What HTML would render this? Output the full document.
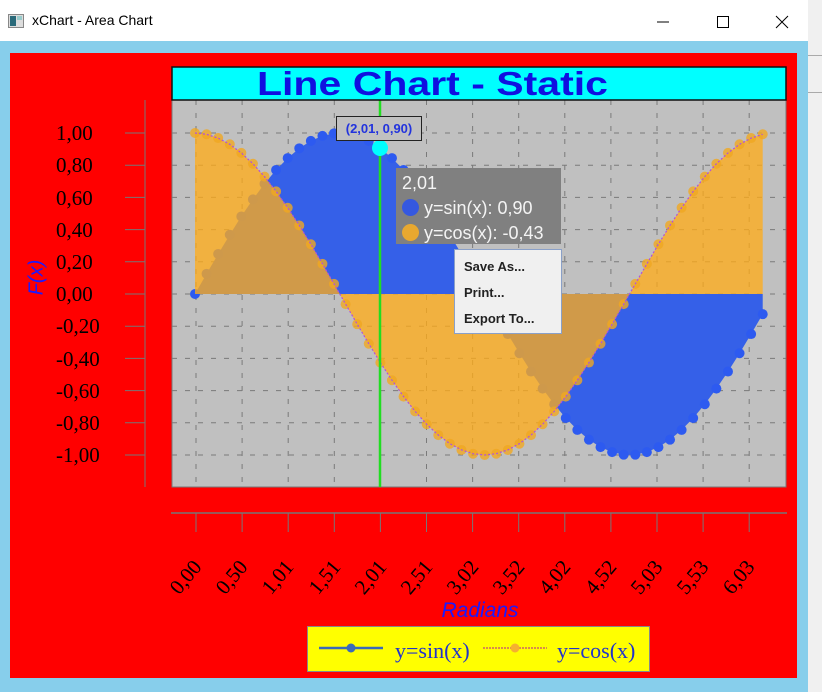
<!DOCTYPE html>
<html><head><meta charset="utf-8">
<style>
*{margin:0;padding:0}
body{width:822px;height:692px;overflow:hidden;background:#f0f0f0;position:relative;font-family:"Liberation Sans",sans-serif}
#win{position:absolute;left:0;top:0;width:808px;height:692px;background:#87ceeb;border-right:1px solid #999}
#tb{position:absolute;left:0;top:0;width:808px;height:41px;background:#fff}
#tb .t{position:absolute;left:32px;top:12px;font-size:14px;color:#000}
#red{position:absolute;left:10px;top:53px;width:787px;height:625px;background:#f00}
.yl{position:absolute;left:56px;font-family:"Liberation Serif",serif;font-size:21px;color:#000;line-height:20px}
.xl{position:absolute;font-family:"Liberation Serif",serif;font-size:21px;color:#000;transform-origin:right bottom;transform:rotate(-50deg);white-space:nowrap}
</style></head><body>
<div id="win">
<div id="tb">
<svg style="position:absolute;left:8px;top:14px" width="16" height="14"><rect x="0.5" y="0.5" width="15" height="13" fill="#ddd" stroke="#888"/><rect x="2" y="2" width="6" height="10" fill="#2a6a7a"/><rect x="9" y="2" width="5" height="4" fill="#9cc"/></svg>
<div class="t">xChart - Area Chart</div>
<svg style="position:absolute;left:650px;top:12px" width="150" height="20"><line x1="7" y1="10" x2="19" y2="10" stroke="#000"/><rect x="67.5" y="4.5" width="11" height="11" fill="none" stroke="#000"/><path d="M126 4 L138 16 M138 4 L126 16" stroke="#000"/></svg>
</div>
<div id="red"></div>
</div>
<div style="position:absolute;left:808px;top:0;width:14px;height:692px;background:#f0f0f0"></div>
<div style="position:absolute;left:808px;top:55px;width:14px;height:1px;background:#aaa"></div>
<div style="position:absolute;left:808px;top:92px;width:14px;height:1px;background:#aaa"></div>

<svg id="ch" style="position:absolute;left:0;top:0" width="822" height="692"></svg>

<div class="yl" style="top:123px">1,00</div>
<div class="yl" style="top:155px">0,80</div>
<div class="yl" style="top:188px">0,60</div>
<div class="yl" style="top:220px">0,40</div>
<div class="yl" style="top:252px">0,20</div>
<div class="yl" style="top:284px">0,00</div>
<div class="yl" style="top:316px">-0,20</div>
<div class="yl" style="top:349px">-0,40</div>
<div class="yl" style="top:381px">-0,60</div>
<div class="yl" style="top:413px">-0,80</div>
<div class="yl" style="top:445px">-1,00</div>
<div style="position:absolute;left:12px;top:266px;width:50px;text-align:center;transform:rotate(-90deg);font-style:italic;color:#1a1aff;font-size:20px">F(x)</div>

<div id="xls"></div>
<div style="position:absolute;left:380px;top:599px;width:200px;text-align:center;font-style:italic;color:#1a1aff;font-size:21px">Radians</div>

<div style="position:absolute;left:307px;top:626px;width:341px;height:44px;background:#ff0;border:1px solid #888"></div>
<svg style="position:absolute;left:307px;top:626px" width="343" height="46">
<line x1="12" y1="22" x2="76" y2="22" stroke="#3a6ab8" stroke-width="2.5"/><circle cx="44" cy="22" r="4.5" fill="#3a6ab8"/>
<line x1="176" y1="22" x2="240" y2="22" stroke="#c66" stroke-width="1.5" stroke-dasharray="2,1"/><circle cx="208" cy="22" r="4.5" fill="#f5b030"/>
</svg>
<div style="position:absolute;left:395px;top:638px;font-family:'Liberation Serif',serif;font-size:22px;color:#2233cc">y=sin(x)</div>
<div style="position:absolute;left:557px;top:638px;font-family:'Liberation Serif',serif;font-size:22px;color:#2233cc">y=cos(x)</div>

<div style="position:absolute;left:396px;top:168px;width:165px;height:76px;background:#808080"></div>
<div style="position:absolute;left:402px;top:171px;color:#f4f4f4;font-size:18px;line-height:25px">2,01<br><span style="display:inline-block;width:17px;height:17px;border-radius:50%;background:#3558e0;vertical-align:-2px;margin-right:5px"></span>y=sin(x): 0,90<br><span style="display:inline-block;width:17px;height:17px;border-radius:50%;background:#e8a830;vertical-align:-2px;margin-right:5px"></span>y=cos(x): -0,43</div>

<div style="position:absolute;left:454px;top:249px;width:106px;height:83px;background:#f0f0f0;border:1px solid #8aa0c8"></div>
<div style="position:absolute;left:464px;top:254px;font-size:13px;font-weight:bold;color:#222;line-height:26px">Save As...<br>Print...<br>Export To...</div>

<div style="position:absolute;left:336px;top:116px;width:84px;height:23px;background:#c0c0c0;border:1px solid #222;text-align:center;font-size:13px;font-weight:bold;color:#2233dd;line-height:23px">(2,01, 0,90)</div>

<script>
var s='';
var X=function(t){return 195+92.2*t},Y=function(v){return 294-161*v};
s+='<rect x="172" y="100" width="614" height="387" fill="#c0c0c0" stroke="#777"/>';
for(var i=0;i<13;i++){var x=196+46.1*i;s+='<line x1="'+x+'" y1="100" x2="'+x+'" y2="487" stroke="#7a7a7a" stroke-dasharray="5,8"/>';}
for(var j=-5;j<=5;j++){var y=294-32.2*j;s+='<line x1="172" y1="'+y+'" x2="786" y2="'+y+'" stroke="#7a7a7a" stroke-dasharray="5,8"/>';
 s+='<line x1="125" y1="'+y+'" x2="145" y2="'+y+'" stroke="#777"/>';}
s+='<line x1="145" y1="100" x2="145" y2="487" stroke="#777"/>';
var n=50,ps=[],pc=[];
for(var i=0;i<n;i++){var t=i*2*Math.PI/n;ps.push([X(t),Y(Math.sin(t))]);pc.push([X(t),Y(Math.cos(t))]);}
function poly(p){return p.map(function(a){return a[0].toFixed(1)+','+a[1].toFixed(1)}).join(' ');}
var l=ps[n-1][0];
s+='<polygon points="195,294 '+poly(ps)+' '+l+',294" fill="#3560e8"/>';
ps.forEach(function(a){s+='<circle cx="'+a[0]+'" cy="'+a[1]+'" r="5" fill="#2d5af0"/>';});
s+='<polygon points="195,294 '+poly(pc)+' '+l+',294" fill="rgba(255,172,25,0.77)"/>';
pc.forEach(function(a){s+='<circle cx="'+a[0]+'" cy="'+a[1]+'" r="5" fill="#f0a820" fill-opacity="0.8"/>';});
s+='<polyline points="'+poly(pc)+'" fill="none" stroke="#b050e0" stroke-width="1.2" stroke-dasharray="2,2"/>';
s+='<line x1="380" y1="100" x2="380" y2="487" stroke="#22dd22" stroke-width="2.5"/>';
s+='<circle cx="380" cy="148" r="8" fill="#00ffff"/>';
s+='<rect x="172" y="67" width="614" height="33" fill="#00ffff" stroke="#111" stroke-width="1.5"/>';
s+='<text x="257" y="0" textLength="351" lengthAdjust="spacingAndGlyphs" font-family="Liberation Sans" font-weight="bold" font-size="30" fill="#1010e0" transform="translate(0,95) scale(1,1.12)">Line Chart - Static</text>';
s+='<line x1="171" y1="513" x2="787" y2="513" stroke="#777" stroke-width="1.5"/>';
for(var i=0;i<13;i++){var x=196+46.1*i;s+='<line x1="'+x+'" y1="513" x2="'+x+'" y2="532" stroke="#777"/>';}
document.getElementById('ch').innerHTML=s;
var lb=['0,00','0,50','1,01','1,51','2,01','2,51','3,02','3,52','4,02','4,52','5,03','5,53','6,03'],h='';
for(var i=0;i<13;i++){var x=196+46.1*i;h+='<div class="xl" style="right:'+(822-x-10)+'px;top:548px;height:22px;line-height:22px">'+lb[i]+'</div>';}
document.getElementById('xls').innerHTML=h;
</script>
</body></html>
